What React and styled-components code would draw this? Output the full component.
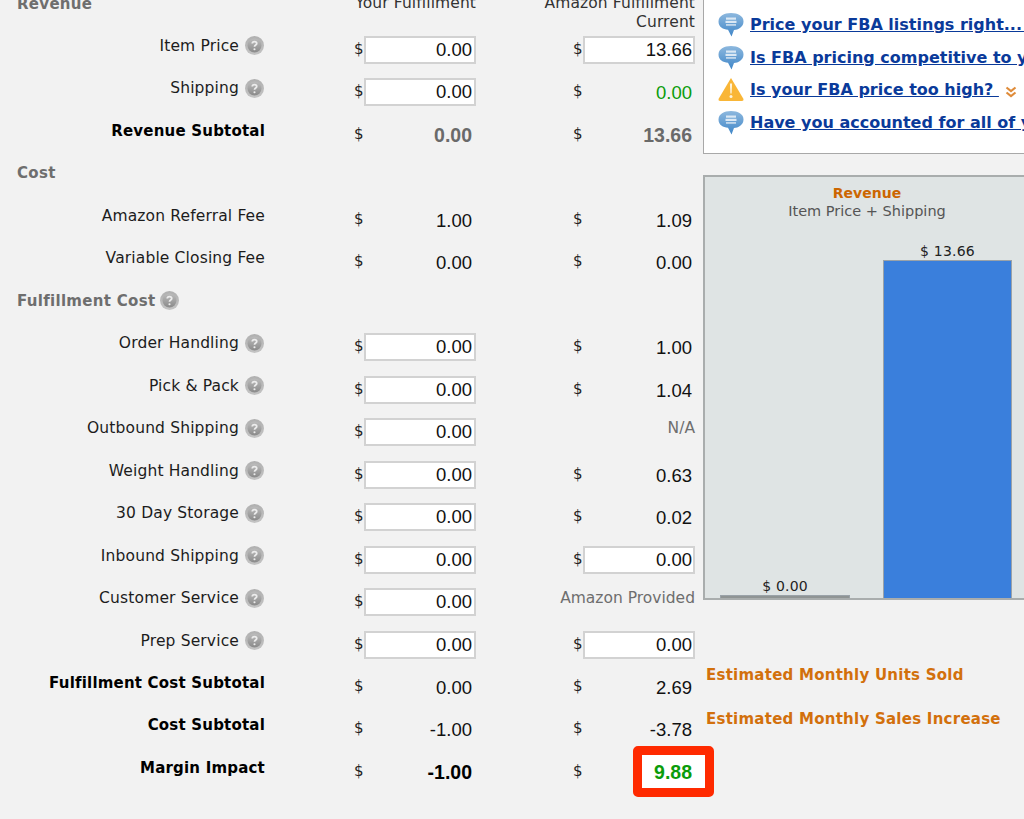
import styled, { createGlobalStyle } from 'styled-components';

const GlobalStyle = createGlobalStyle`
  html, body {
    margin: 0;
    padding: 0;
    background: #f2f2f2;
  }
  #root {
    height: 819px;
    overflow: hidden;
  }
`;

const labelFont = `"DejaVu Sans", Verdana, sans-serif`;
const numberFont = `"Liberation Sans", Arial, sans-serif`;

const rows = [
  { label: 'Item Price', help: true, you: { input: '0.00' }, amazon: { input: '13.66' } },
  { label: 'Shipping', help: true, you: { input: '0.00' }, amazon: { text: '0.00', tone: 'green' } },
  { label: 'Revenue Subtotal', bold: true, you: { text: '0.00', tone: 'strongGrey' }, amazon: { text: '13.66', tone: 'strongGrey' } },
  { section: 'Cost' },
  { label: 'Amazon Referral Fee', you: { text: '1.00' }, amazon: { text: '1.09' } },
  { label: 'Variable Closing Fee', you: { text: '0.00' }, amazon: { text: '0.00' } },
  { section: 'Fulfillment Cost', help: true },
  { label: 'Order Handling', help: true, you: { input: '0.00' }, amazon: { text: '1.00' } },
  { label: 'Pick & Pack', help: true, you: { input: '0.00' }, amazon: { text: '1.04' } },
  { label: 'Outbound Shipping', help: true, you: { input: '0.00' }, amazon: { note: 'N/A' } },
  { label: 'Weight Handling', help: true, you: { input: '0.00' }, amazon: { text: '0.63' } },
  { label: '30 Day Storage', help: true, you: { input: '0.00' }, amazon: { text: '0.02' } },
  { label: 'Inbound Shipping', help: true, you: { input: '0.00' }, amazon: { input: '0.00' } },
  { label: 'Customer Service', help: true, you: { input: '0.00' }, amazon: { note: 'Amazon Provided' } },
  { label: 'Prep Service', help: true, you: { input: '0.00' }, amazon: { input: '0.00' } },
  { label: 'Fulfillment Cost Subtotal', bold: true, you: { text: '0.00' }, amazon: { text: '2.69' } },
  { label: 'Cost Subtotal', bold: true, you: { text: '-1.00' }, amazon: { text: '-3.78' } },
  { label: 'Margin Impact', bold: true, you: { text: '-1.00', tone: 'strong' }, amazon: { text: '9.88', tone: 'winner' } },
];

const links = [
  { text: 'Price your FBA listings right... ', icon: 'bubble' },
  { text: 'Is FBA pricing competitive to your other channels?', icon: 'bubble' },
  { text: 'Is your FBA price too high? ', icon: 'warning', more: true },
  { text: 'Have you accounted for all of your costs?', icon: 'bubble' },
];

function HelpIcon() {
  return (
    <HelpSvg viewBox="0 0 18 18">
      <defs>
        <linearGradient id="helpFill" x1="0" y1="0" x2="0" y2="1">
          <stop offset="0" stopColor="#bcbcbc" />
          <stop offset="1" stopColor="#8a8a8a" />
        </linearGradient>
        <linearGradient id="helpRim" x1="0" y1="0" x2="0" y2="1">
          <stop offset="0" stopColor="#b0b0b0" />
          <stop offset="1" stopColor="#c4c4c4" />
        </linearGradient>
      </defs>
      <circle cx="9" cy="9" r="9" fill="url(#helpRim)" />
      <circle cx="9" cy="9" r="6.600" fill="url(#helpFill)" />
      <path d="M6.900 7.200c0-1.200 1-1.900 2.100-1.900s2.100.7 2.100 1.800c0 1.500-2.100 1.500-2.100 3.100" fill="none" stroke="#ececec" strokeWidth="1.700" />
      <circle cx="9" cy="12.600" r="1" fill="#ececec" />
    </HelpSvg>
  );
}

function BubbleIcon() {
  return (
    <LinkSvg viewBox="0 0 26 25">
      <defs>
        <linearGradient id="bubbleFill" x1="0" y1="0" x2="0" y2="1">
          <stop offset="0" stopColor="#8db8de" />
          <stop offset="1" stopColor="#3f86c8" />
        </linearGradient>
      </defs>
      <path d="M13 1c7 0 12.500 3 12.500 8.500S20 18 16 18l-2.500 6.500L10 17.800C5 17.300.5 15 .5 9.500S6 1 13 1z" fill="url(#bubbleFill)" />
      <rect x="8" y="5.500" width="10" height="2.200" fill="#dbe8f4" />
      <rect x="7.500" y="8.800" width="11" height="2.200" fill="#dbe8f4" />
      <rect x="8" y="12" width="10" height="1.800" fill="#c2d8ec" />
    </LinkSvg>
  );
}

function WarningIcon() {
  return (
    <LinkSvg viewBox="0 0 26 25">
      <path d="M13 1 L25.500 22 Q25.800 24 24 24 H2 Q.2 24 .5 22 Z" fill="#f9b637" />
      <path d="M11.900 6.500h2.200l-.5 10h-1.200z" fill="#fff4dc" />
      <circle cx="13" cy="19.500" r="1.500" fill="#fff4dc" />
    </LinkSvg>
  );
}

function MoreIcon() {
  return (
    <MoreSvg viewBox="0 0 12 12">
      <path d="M1.500 1.500 6 5l4.500-3.500M1.500 6.500 6 10l4.500-3.500" fill="none" stroke="#df8c3a" strokeWidth="2.200" />
    </MoreSvg>
  );
}

function Amount({ data, amazon }) {
  if (data.note) {
    return <AmountCell $note><Note>{data.note}</Note></AmountCell>;
  }
  return (
    <AmountCell>
      <Dollar>$</Dollar>
      {data.input ? (
        <PriceInput $amazon={amazon} defaultValue={data.input} readOnly />
      ) : data.tone === 'winner' ? (
        <Highlighted $amazon={amazon} $tone="strong">{data.text}</Highlighted>
      ) : (
        <Value $amazon={amazon} $tone={data.tone}>{data.text}</Value>
      )}
    </AmountCell>
  );
}

export default function App() {
  return (
    <Page>
      <GlobalStyle />
      <Table>
        <Row>
          <SectionTitle>Revenue</SectionTitle>
          <HeadCell>Your Fulfillment</HeadCell>
          <HeadCell>Amazon Fulfillment<br />Current</HeadCell>
        </Row>
        {rows.map((row) =>
          row.section ? (
            <Row key={row.section}>
              <SectionTitle>
                {row.section}
                {row.help && <HelpIcon />}
              </SectionTitle>
            </Row>
          ) : (
            <Row key={row.label}>
              <Label $bold={row.bold}>
                {row.label}
                {row.help && <HelpIcon />}
              </Label>
              <Amount data={row.you} />
              <Amount data={row.amazon} amazon />
            </Row>
          )
        )}
      </Table>
      <Side>
        <LinkBox>
          {links.map((link) => (
            <LinkRow key={link.text}>
              {link.icon === 'warning' ? <WarningIcon /> : <BubbleIcon />}
              <LinkText>{link.text}</LinkText>
              {link.more && <MoreIcon />}
            </LinkRow>
          ))}
        </LinkBox>
        <Chart>
          <ChartTitle>Revenue</ChartTitle>
          <ChartSubtitle>Item Price + Shipping</ChartSubtitle>
          <Bars>
            <BarColumn $width={130}>
              <BarLabel>$ 0.00</BarLabel>
              <Bar $height={3} $color="#8f9494" />
            </BarColumn>
            <BarColumn $width={129}>
              <BarLabel>$ 13.66</BarLabel>
              <Bar $height={338} $color="#3a7fdc" />
            </BarColumn>
          </Bars>
        </Chart>
        <Estimates>
          <Estimate>Estimated Monthly Units Sold</Estimate>
          <Estimate>Estimated Monthly Sales Increase</Estimate>
        </Estimates>
      </Side>
    </Page>
  );
}

const Page = styled.div`
  display: flex;
  width: 1024px;
  height: 819px;
  overflow: hidden;
  color: #111;
  font-family: ${labelFont};
`;

const Table = styled.div`
  flex: 0 0 703px;
  margin-top: -7.5px;
`;

const Row = styled.div`
  display: grid;
  grid-template-columns: 265px 211px 219px;
  height: 42.470px;
  align-items: start;
`;

const SectionTitle = styled.div`
  display: flex;
  align-items: center;
  gap: 5px;
  grid-column: 1 / 2;
  padding: 1px 0 0 17px;
  font-size: 15px;
  font-weight: 700;
  letter-spacing: 0.3px;
  line-height: 20px;
  color: #6e6e6e;
  white-space: nowrap;
`;

const HeadCell = styled.div`
  justify-self: end;
  padding-top: 1px;
  text-align: right;
  font-size: 15.500px;
  letter-spacing: 0.1px;
  line-height: 19.500px;
  color: #333;
  white-space: nowrap;
`;

const Label = styled.div`
  display: flex;
  align-items: center;
  justify-content: flex-end;
  gap: 6px;
  padding-top: 1px;
  font-size: ${(p) => (p.$bold ? '15px' : '15.500px')};
  font-weight: ${(p) => (p.$bold ? 700 : 400)};
  letter-spacing: ${(p) => (p.$bold ? '0.2px' : '0.15px')};
  line-height: 20px;
  color: ${(p) => (p.$bold ? '#000' : '#1c1c1c')};
  white-space: nowrap;
`;

const HelpSvg = styled.svg`
  width: 19px;
  height: 19px;
  flex: none;
  margin-right: 1px;
`;

const AmountCell = styled.div`
  justify-self: end;
  display: flex;
  justify-content: ${(p) => (p.$note ? 'flex-end' : 'space-between')};
  width: 122px;
  position: relative;
`;

const Dollar = styled.span`
  font-size: 15px;
  line-height: 28px;
  color: #222;
`;

const PriceInput = styled.input`
  box-sizing: border-box;
  width: 112px;
  height: 28px;
  margin-top: 1px;
  padding: 0 ${(p) => (p.$amazon ? '1px' : '2px')} 0 0;
  border: 2px solid #d2d2d2;
  background: #fff;
  text-align: right;
  font-family: ${numberFont};
  font-size: 18.500px;
  color: #111;
  outline: none;
`;

const toneStyles = {
  green: 'color: #0a9c0a;',
  strongGrey: 'color: #6a6a6a; font-weight: 700; font-size: 19.500px;',
  strong: 'color: #000; font-weight: 700; font-size: 19.500px;',
};

const Value = styled.span`
  width: 108px;
  margin-right: ${(p) => (p.$amazon ? '3px' : '4px')};
  text-align: right;
  font-family: ${numberFont};
  font-size: 18.500px;
  line-height: 31px;
  color: #111;
  ${(p) => toneStyles[p.$tone] || ''}
`;

const Highlighted = styled(Value)`
  position: relative;
  z-index: 0;
  color: #0a9c0a;
  &::before {
    content: '';
    position: absolute;
    z-index: -1;
    top: -11px;
    left: 49px;
    width: 63px;
    height: 33px;
    border: 9px solid #ff2a00;
    border-radius: 5px;
    background: #fff;
  }
`;

const Note = styled.span`
  flex: none;
  padding-top: 1px;
  font-size: 15.500px;
  line-height: 20px;
  color: #6e6e6e;
  white-space: nowrap;
`;

const Side = styled.div`
  flex: 0 0 326px;
  min-width: 0;
  display: flex;
  flex-direction: column;
`;

const LinkBox = styled.div`
  box-sizing: border-box;
  flex: none;
  height: 154px;
  padding: 8px 0 0 14px;
  border: 1px solid #a8a8a8;
  border-top: none;
  background: #fff;
  overflow: hidden;
`;

const LinkRow = styled.div`
  display: flex;
  align-items: center;
  height: 32.700px;
  white-space: nowrap;
`;

const LinkSvg = styled.svg`
  width: 26px;
  height: 25px;
  flex: none;
  margin-right: 6px;
`;

const LinkText = styled.span`
  font-size: 16px;
  font-weight: 700;
  color: #0a3a9a;
  text-decoration: underline;
  white-space: pre;
`;

const MoreSvg = styled.svg`
  width: 12px;
  height: 12px;
  flex: none;
  margin: 4px 0 0 6px;
`;

const Chart = styled.div`
  box-sizing: border-box;
  flex: none;
  display: flex;
  flex-direction: column;
  height: 425px;
  margin-top: 21px;
  padding-top: 7px;
  border: 2px solid #a9adad;
  border-right: none;
  background: #dfe4e4;
  text-align: center;
`;

const ChartTitle = styled.div`
  font-size: 14px;
  font-weight: 700;
  line-height: 18px;
  color: #cc6600;
`;

const ChartSubtitle = styled.div`
  font-size: 14.500px;
  line-height: 18px;
  color: #555;
`;

const Bars = styled.div`
  flex: 1;
  display: flex;
  align-items: flex-end;
  gap: 33px;
  padding-left: 15px;
`;

const BarColumn = styled.div`
  width: ${(p) => p.$width}px;
`;

const BarLabel = styled.div`
  font-size: 14px;
  letter-spacing: 0.2px;
  line-height: 18px;
  color: #222;
`;

const Bar = styled.div`
  box-sizing: border-box;
  height: ${(p) => p.$height}px;
  border: 1px solid #9aa2a8;
  border-bottom: none;
  background: ${(p) => p.$color};
`;

const Estimates = styled.div`
  display: flex;
  flex-direction: column;
  gap: 24px;
  margin-top: 65px;
  padding-left: 3px;
`;

const Estimate = styled.div`
  font-size: 15px;
  font-weight: 700;
  letter-spacing: 0.25px;
  line-height: 20px;
  color: #d2700c;
  white-space: nowrap;
`;
